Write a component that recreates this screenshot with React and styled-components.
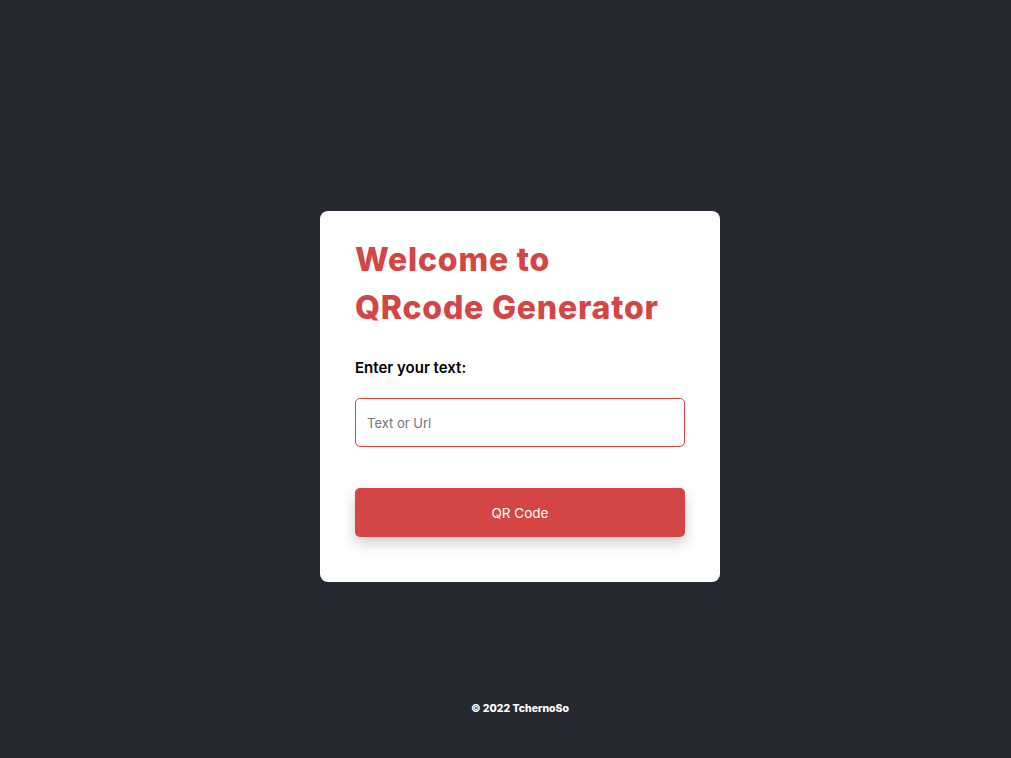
import { useState } from 'react'
import styled, { createGlobalStyle } from 'styled-components'

const GlobalStyle = createGlobalStyle`
  * { box-sizing: border-box; }
  body {
    margin: 0;
    background: #262931;
    font-family: Inter, "Noto Sans", sans-serif;
  }
`

export default function App() {
  const [text, setText] = useState('')

  return (
    <Page>
      <GlobalStyle />
      <Card>
        <Title>Welcome to<br />QRcode Generator</Title>
        <Label htmlFor="qr-text">Enter your text:</Label>
        <Input
          id="qr-text"
          type="text"
          placeholder="Text or Url"
          value={text}
          onChange={e => setText(e.target.value)}
        />
        <Button type="button">QR Code</Button>
      </Card>
      <Footer>© 2022 TchernoSo</Footer>
    </Page>
  )
}

const Page = styled.div`
  min-height: 100vh;
  display: flex;
  flex-direction: column;
  align-items: center;
  padding: 211px 0 0 29px;
`

const Card = styled.section`
  width: 400px;
  background: #fff;
  border-radius: 8px;
  padding: 25px 35px 45px;
  display: flex;
  flex-direction: column;
`

const Title = styled.h1`
  margin: 0;
  color: #d44545;
  font-size: 32px;
  font-weight: 800;
  line-height: 48px;
  letter-spacing: 0.8px;
`

const Label = styled.label`
  margin-top: 25px;
  font-size: 15px;
  font-weight: 600;
  color: #000;
  line-height: 22px;
`

const Input = styled.input`
  margin-top: 19px;
  height: 49px;
  width: 100%;
  border: 1px solid #d44545;
  border-radius: 5px;
  padding: 0 11px;
  font-family: inherit;
  font-size: 13px;
  outline: none;
  &::placeholder { color: #757575; }
`

const Button = styled.button`
  margin-top: 41px;
  height: 49px;
  width: 100%;
  border: none;
  border-radius: 5px;
  background: #d44545;
  color: #fff;
  font-family: inherit;
  font-size: 13.5px;
  box-shadow: 0 6px 14px rgba(0, 0, 0, 0.2);
  cursor: pointer;
`

const Footer = styled.footer`
  margin-top: 120px;
  color: #fff;
  font-size: 10.5px;
  font-weight: 800;
`
